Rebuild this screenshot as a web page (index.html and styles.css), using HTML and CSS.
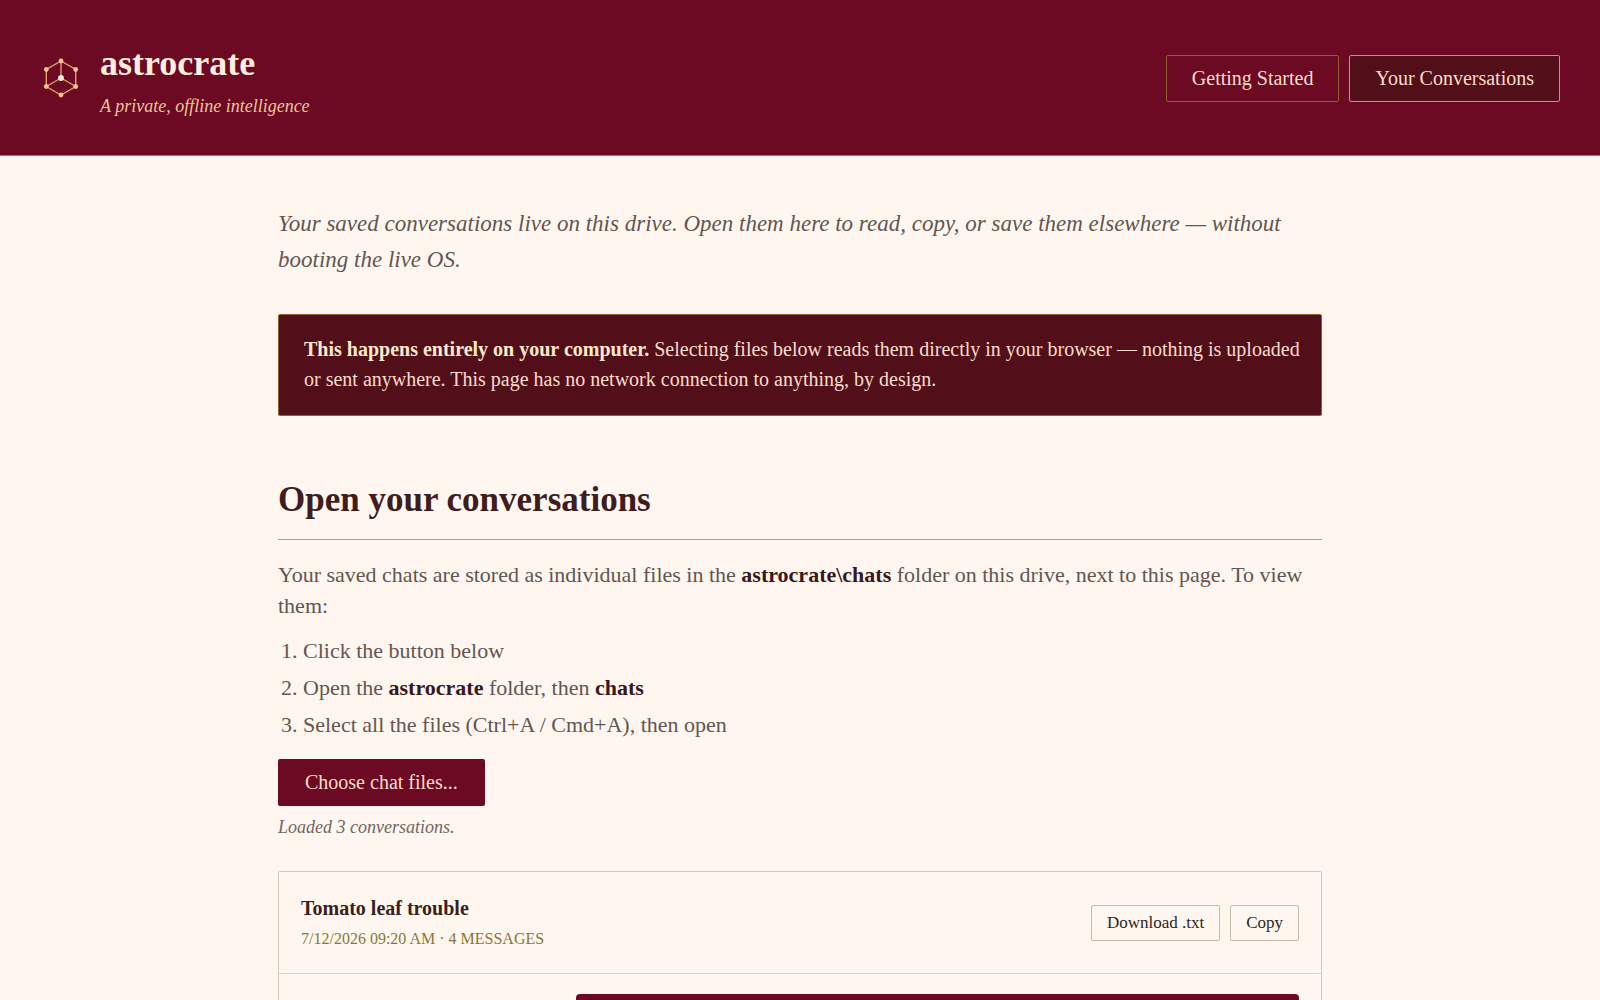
FILE: index.html
```html
<!DOCTYPE html>
<html lang="en">
  <head>
    <meta charset="UTF-8" />
    <meta name="viewport" content="width=device-width, initial-scale=1.0" />
    <title>astrocrate - Your Conversations</title>
    <link rel="stylesheet" href="styles.css">
  </head>
  <body>
    <header>
      <div class="brand">
        <svg class="logo" viewBox="0 0 40 40" aria-hidden="true">
          <g class="edges">
            <path d="M20 3 34.7 11.5V28.5L20 37 5.3 28.5V11.5Z" />
            <path d="M20 20V3M20 20 34.7 28.5M20 20 5.3 28.5" />
          </g>
          <g class="nodes">
            <circle cx="20" cy="3" r="2.4" />
            <circle cx="34.7" cy="11.5" r="2.4" />
            <circle cx="34.7" cy="28.5" r="2.4" />
            <circle cx="20" cy="37" r="2.4" />
            <circle cx="5.3" cy="28.5" r="2.4" />
            <circle cx="5.3" cy="11.5" r="2.4" />
          </g>
          <circle class="core" cx="20" cy="20" r="2.9" />
        </svg>
        <div>
          <div class="brand-name">astrocrate</div>
          <div class="tagline">A private, offline intelligence</div>
        </div>
      </div>
      <nav>
        <a href="#start">Getting Started</a>
        <a href="#conversations" class="active">Your Conversations</a>
      </nav>
    </header>

    <main>
      <p class="lead">Your saved conversations live on this drive. Open them here to read, copy, or save them elsewhere — without booting the live OS.</p>

      <div class="notice">
        <p><strong>This happens entirely on your computer.</strong> Selecting files below reads them directly in your browser — nothing is uploaded or sent anywhere. This page has no network connection to anything, by design.</p>
      </div>

      <section id="conversations">
        <h2>Open your conversations</h2>
        <p>Your saved chats are stored as individual files in the <strong>astrocrate\chats</strong> folder on this drive, next to this page. To view them:</p>
        <ol>
          <li>Click the button below</li>
          <li>Open the <strong>astrocrate</strong> folder, then <strong>chats</strong></li>
          <li>Select all the files (Ctrl+A / Cmd+A), then open</li>
        </ol>
        <button class="choose" onclick="picker.click()">Choose chat files...</button>
        <input type="file" id="picker" multiple hidden />
        <p class="status">Loaded 3 conversations.</p>
      </section>

      <article class="card">
        <div class="card-head">
          <div>
            <h3>Tomato leaf trouble</h3>
            <div class="meta">7/12/2026 09:20 AM · 4 messages</div>
          </div>
          <div class="actions">
            <button>Download .txt</button>
            <button>Copy</button>
          </div>
        </div>
        <div class="messages">
          <div class="bubble"></div>
        </div>
      </article>
    </main>
  </body>
</html>
```
FILE: styles.css
```css
* {
  box-sizing: border-box;
}

body {
  margin: 0;
  background-color: #fff7ef;
  color: #645550;
  font-family: "Liberation Serif", serif;
  font-size: 22px;
  line-height: 31px;
}

header {
  display: flex;
  justify-content: space-between;
  align-items: center;
  padding: 35px 40px 34px;
  background-color: #6b0a22;
  border-bottom: 1px solid #a5793f;
}

.brand {
  display: flex;
  align-items: center;
  gap: 18px;
}

.logo {
  width: 42px;
  height: 40px;
  overflow: visible;
}

.edges {
  fill: none;
  stroke: #dc9f6c;
  stroke-width: 1.4;
}

.nodes {
  fill: #f5c48e;
}

.core {
  fill: #fff0dc;
}

.brand-name {
  color: #ffeedd;
  font-size: 36px;
  font-weight: bold;
  line-height: 56px;
}

.tagline {
  color: #f0c49a;
  font-size: 18px;
  font-style: italic;
  line-height: 30px;
}

nav {
  display: flex;
  gap: 10px;
}

nav a {
  padding: 8px 25px;
  border: 1px solid #94602a;
  border-radius: 2px;
  color: #fbdccb;
  font-size: 20px;
  line-height: 29px;
  text-decoration: none;
}

nav a.active {
  background-color: #520f1a;
  border-color: #c9965c;
}

main {
  max-width: 1100px;
  margin: 0 auto;
  padding: 50px 28px;
}

p {
  margin: 0;
}

.lead {
  font-size: 23px;
  font-style: italic;
  line-height: 36px;
}

.notice {
  margin-top: 36px;
  padding: 19px 14px 21px 25px;
  background-color: #520f1a;
  border: 1px solid #8f6428;
  border-radius: 2px;
  color: #fbdccb;
  font-size: 20px;
  line-height: 30px;
}

.notice strong {
  color: #ffe9cc;
}

h2 {
  margin: 60px 0 19px;
  padding-bottom: 16px;
  border-bottom: 1px solid #c79e62;
  color: #3f1d1e;
  font-size: 35px;
  line-height: 47px;
}

section strong {
  color: #3a181a;
}

ol {
  margin: 14px 0 19px;
  padding-left: 25px;
}

li {
  margin-bottom: 6px;
}

button {
  border-radius: 2px;
  font-family: inherit;
  cursor: pointer;
}

.choose {
  display: block;
  padding: 9px 27px;
  background-color: #6b0a22;
  border: none;
  color: #fbdccb;
  font-size: 20px;
  line-height: 29px;
}

.status {
  margin-top: 7px;
  font-size: 18px;
  font-style: italic;
  line-height: 28px;
  color: #736560;
}

.card {
  margin-top: 30px;
  border: 1px solid #d6c8bb;
  border-radius: 2px;
}

.card-head {
  display: flex;
  justify-content: space-between;
  align-items: center;
  padding: 20px 22px 19px;
  border-bottom: 1px solid #dccfc3;
}

h3 {
  margin: 0;
  color: #3a1f20;
  font-size: 20px;
  line-height: 32px;
}

.meta {
  color: #8f7436;
  font-size: 16px;
  line-height: 30px;
  text-transform: uppercase;
}

.actions {
  display: flex;
  gap: 10px;
}

.actions button {
  padding: 5px 15px;
  background-color: transparent;
  border: 1px solid #c9b9aa;
  color: #2c2524;
  font-size: 17px;
  line-height: 24px;
}

.messages {
  padding: 20px 22px;
}

.bubble {
  min-height: 60px;
  margin-left: 275px;
  background-color: #6b0a22;
  border-radius: 4px;
}
```
